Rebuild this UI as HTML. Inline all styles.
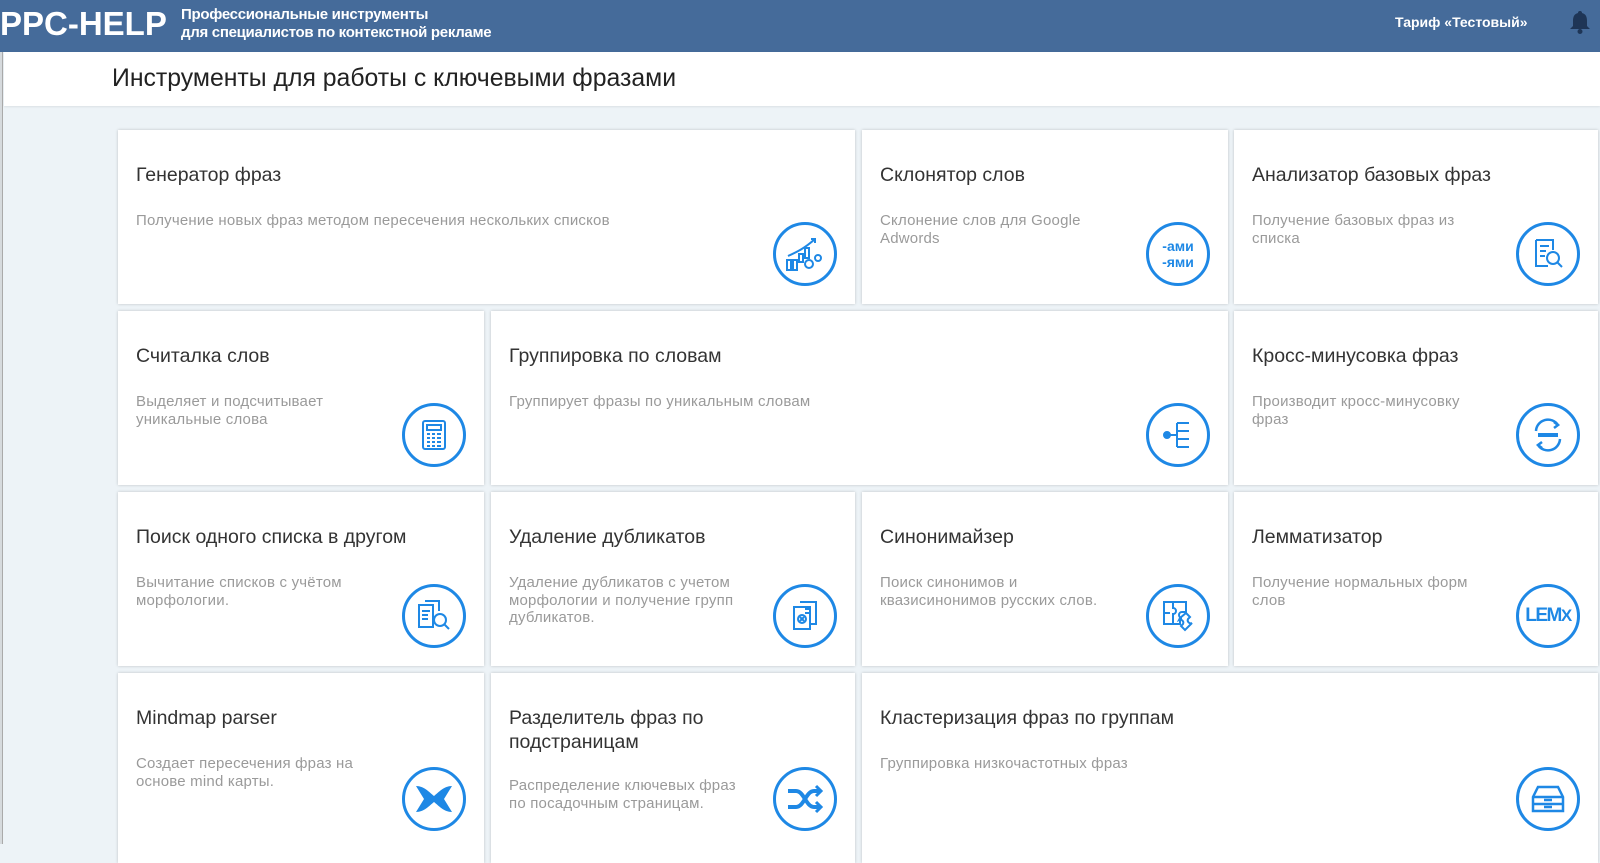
<!DOCTYPE html>
<html><head><meta charset="utf-8">
<style>
*{margin:0;padding:0;box-sizing:border-box}
body{width:1600px;height:844px;overflow:hidden;background:#edf3f7;font-family:"Liberation Sans","DejaVu Sans",sans-serif;position:relative}
.hdr{position:absolute;left:0;top:0;width:1600px;height:52px;background:#456b9a;color:#fff}
.logo{position:absolute;left:0;top:5px;font-size:33px;font-weight:bold;letter-spacing:0px}
.sub{position:absolute;left:181px;top:6px;font-size:15px;line-height:17.5px;font-weight:bold;letter-spacing:-0.3px}
.tarif{position:absolute;left:1395px;top:14px;font-size:14px;font-weight:bold}
.bell{position:absolute;left:1569px;top:10px}
.lline{position:absolute;left:0;top:52px;width:3px;height:792px;background:#d6dadd;border-right:1px solid #aaa}
.tbar{position:absolute;left:4px;top:52px;width:1596px;height:54px;background:#fff;box-shadow:0 1px 2px rgba(0,0,0,.08)}
.tbar h1{position:absolute;left:108px;top:13px;font-weight:normal;font-size:24.8px;color:#222}
.c{position:absolute;background:#fff;box-shadow:0 0 3px rgba(0,0,0,.2)}
.c h2{position:absolute;left:18px;top:33px;font-weight:normal;font-size:19.5px;color:#333;line-height:24px}
.c p{position:absolute;left:18px;top:82px;font-size:15px;letter-spacing:0.2px;color:#9a9a9a;line-height:17.5px;max-width:232px}
.c.w p{max-width:none}
.ic{position:absolute;right:18px;bottom:18px;width:64px;height:64px;border:3px solid #1e88e5;border-radius:50%;display:flex;align-items:center;justify-content:center;color:#1e88e5}
</style></head><body>
<div class="hdr">
<div class="logo">PPC-HELP</div>
<div class="sub">Профессиональные инструменты<br>для специалистов по контекстной рекламе</div>
<div class="tarif">Тариф «Тестовый»</div>
<svg class="bell" width="22" height="24" viewBox="0 0 22 24"><path d="M11 1a2 2 0 0 1 2 2c4 1 5 4 5 8v5l3 3H1l3-3v-5c0-4 1-7 5-8a2 2 0 0 1 2-2z" fill="#1e3556"/><circle cx="11" cy="21.5" r="2.5" fill="#1e3556"/></svg>
</div>
<div class="lline"></div>
<div class="tbar"><h1>Инструменты для работы с ключевыми фразами</h1></div>

<div class="c w" style="left:118px;top:130px;width:737px;height:174px"><h2>Генератор фраз</h2><p>Получение новых фраз методом пересечения нескольких списков</p>
<div class="ic"><svg width="40" height="36" viewBox="0 0 40 36" fill="none" stroke="#1e88e5" stroke-width="2"><path d="M3 20C12 16 20 12 30 3M26 3h4v4"/><rect x="2" y="24" width="4" height="10"/><rect x="8" y="24" width="4" height="10"/><rect x="14" y="18" width="4" height="8"/><rect x="20" y="12" width="4" height="10"/><circle cx="24" cy="28" r="4"/><circle cx="33" cy="22" r="3"/></svg></div></div>
<div class="c" style="left:862px;top:130px;width:366px;height:174px"><h2>Склонятор слов</h2><p>Склонение слов для Google Adwords</p>
<div class="ic" style="font-size:14px;font-weight:bold;line-height:16px;text-align:center">-ами<br>-ями</div></div>
<div class="c" style="left:1234px;top:130px;width:364px;height:174px"><h2>Анализатор базовых фраз</h2><p>Получение базовых фраз из списка</p>
<div class="ic"><svg width="34" height="34" viewBox="0 0 34 34" fill="none" stroke="#1e88e5" stroke-width="2"><path d="M5 3h17v10M5 3v26h12"/><path d="M9 9h9M9 14h6M9 19h5"/><circle cx="22" cy="21" r="6"/><path d="M26 25l5 5"/></svg></div></div>

<div class="c" style="left:118px;top:311px;width:366px;height:174px"><h2>Считалка слов</h2><p>Выделяет и подсчитывает уникальные слова</p>
<div class="ic"><svg width="26" height="32" viewBox="0 0 26 32" fill="none" stroke="#1e88e5" stroke-width="2"><rect x="2" y="2" width="22" height="28" rx="2"/><rect x="6" y="6" width="14" height="5"/><path d="M6 15h3M11 15h3M16 15h4M6 19h3M11 19h3M16 19h4M6 23h3M11 23h3M16 23h4M6 27h3M11 27h3M16 27h4"/></svg></div></div>
<div class="c w" style="left:491px;top:311px;width:737px;height:174px"><h2>Группировка по словам</h2><p>Группирует фразы по уникальным словам</p>
<div class="ic"><svg width="32" height="30" viewBox="0 0 32 30" fill="none" stroke="#1e88e5" stroke-width="2"><circle cx="5" cy="15" r="3" fill="#1e88e5"/><path d="M5 15h10M15 3v24M15 3h12M15 11h12M15 19h12M15 27h12"/></svg></div></div>
<div class="c" style="left:1234px;top:311px;width:364px;height:174px"><h2>Кросс-минусовка фраз</h2><p>Производит кросс-минусовку фраз</p>
<div class="ic"><svg width="36" height="36" viewBox="0 0 36 36" fill="none" stroke="#1e88e5" stroke-width="2.5"><path d="M6 14A12 12 0 0 1 28 8M24 5l4 3-4 3"/><path d="M30 22A12 12 0 0 1 8 28M12 31l-4-3 4-3"/><path d="M8 18h20" stroke-width="4"/></svg></div></div>

<div class="c" style="left:118px;top:492px;width:366px;height:174px"><h2>Поиск одного списка в другом</h2><p>Вычитание списков с учётом морфологии.</p>
<div class="ic"><svg width="36" height="34" viewBox="0 0 36 34" fill="none" stroke="#1e88e5" stroke-width="2"><rect x="3" y="6" width="14" height="22"/><path d="M9 2h14v10"/><path d="M6 12h8M6 16h6M6 20h6"/><circle cx="24" cy="21" r="6"/><path d="M28 25l5 5"/></svg></div></div>
<div class="c" style="left:491px;top:492px;width:364px;height:174px"><h2>Удаление дубликатов</h2><p>Удаление дубликатов с учетом морфологии и получение групп дубликатов.</p>
<div class="ic"><svg width="30" height="34" viewBox="0 0 30 34" fill="none" stroke="#1e88e5" stroke-width="2"><rect x="4" y="8" width="16" height="22"/><path d="M10 3h16v22h-6"/><circle cx="12" cy="20" r="4"/><path d="M10 18l4 4M14 18l-4 4M15 10h6M15 14h6"/></svg></div></div>
<div class="c" style="left:862px;top:492px;width:366px;height:174px"><h2>Синонимайзер</h2><p>Поиск синонимов и квазисинонимов русских слов.</p>
<div class="ic"><svg width="36" height="36" viewBox="0 0 36 36" fill="none" stroke="#1e88e5" stroke-width="2"><path d="M4 4h22v10h-4a3 3 0 0 0 0 6h-2v6H4z"/><path d="M13 4v6a3 3 0 0 1 0 6v10M4 15h6"/><path d="M20 20l6-5 4 4-2 2a3 3 0 0 0 4 4l-7 7-4-4 2-2a3 3 0 0 0-4-4z"/></svg></div></div>
<div class="c" style="left:1234px;top:492px;width:364px;height:174px"><h2>Лемматизатор</h2><p>Получение нормальных форм слов</p>
<div class="ic" style="font-size:19px;font-weight:bold;letter-spacing:-1.5px">LEM<span style="font-size:17px">X</span></div></div>

<div class="c" style="left:118px;top:673px;width:366px;height:190px"><h2>Mindmap parser</h2><p>Создает пересечения фраз на основе mind карты.</p>
<div class="ic" style="bottom:32px"><svg width="40" height="32" viewBox="0 0 40 32" fill="#1e88e5"><path d="M2 3c8 0 13 6 18 10c5-4 10-10 18-10l-8 13l8 13c-8 0-13-6-18-10c-5 4-10 10-18 10l8-13z"/></svg></div></div>
<div class="c" style="left:491px;top:673px;width:364px;height:190px"><h2>Разделитель фраз по<br>подстраницам</h2><p style="top:104px">Распределение ключевых фраз по посадочным страницам.</p>
<div class="ic" style="bottom:32px"><svg width="38" height="32" viewBox="0 0 38 32" fill="none" stroke="#1e88e5" stroke-width="4"><path d="M2 8h8c8 0 10 16 18 16h6M2 24h8c8 0 10-16 18-16h6"/><path d="M30 3l5 5-5 5M30 19l5 5-5 5" stroke-width="3"/></svg></div></div>
<div class="c w" style="left:862px;top:673px;width:736px;height:190px"><h2>Кластеризация фраз по группам</h2><p>Группировка низкочастотных фраз</p>
<div class="ic" style="bottom:32px"><svg width="34" height="30" viewBox="0 0 34 30" fill="none" stroke="#1e88e5" stroke-width="2.5"><path d="M7 3h20l5 10v14H2V13z"/><path d="M2 13h30M2 20h30M13 16h8M13 23h8"/></svg></div></div>
</body></html>
